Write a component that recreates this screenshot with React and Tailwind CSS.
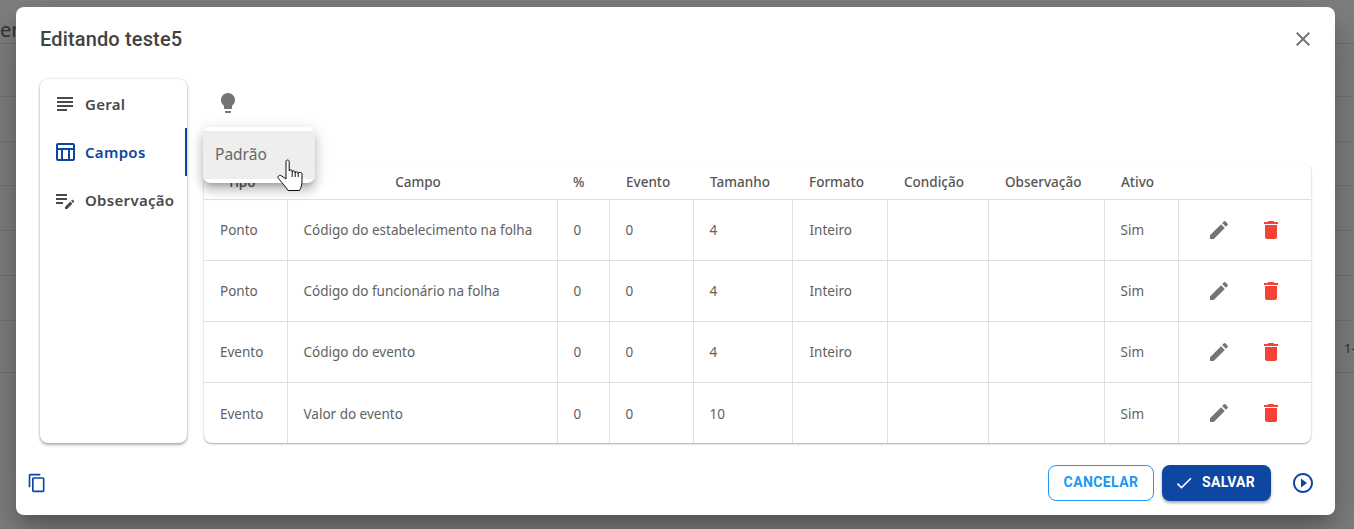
import React from "react";

const icons = {
  subject: "M14 17H4v2h10v-2zm6-8H4v2h16V9zM4 15h16v-2H4v2zM4 5v2h16V5H4z",
  table: "M20 3H5c-1.1 0-2 .9-2 2v14c0 1.1.9 2 2 2h15c1.1 0 2-.9 2-2V5c0-1.1-.9-2-2-2zm0 2v3H5V5h15zm-5 14h-5v-9h5v9zM5 10h3v9H5v-9zm12 9v-9h3v9h-3z",
  note: "M3 10h11v2H3v-2zm0-2h11V6H3v2zm0 8h7v-2H3v2zm15.01-3.13.71-.71c.39-.39 1.02-.39 1.41 0l.71.71c.39.39.39 1.02 0 1.41l-.71.71-2.12-2.12zm-.71.71-5.3 5.3V21h2.12l5.3-5.3-2.12-2.12z",
  bulb: "M9 21c0 .55.45 1 1 1h4c.55 0 1-.45 1-1v-1H9v1zm3-19C8.14 2 5 5.14 5 9c0 2.38 1.19 4.47 3 5.74V17c0 .55.45 1 1 1h6c.55 0 1-.45 1-1v-2.26c1.81-1.27 3-3.36 3-5.74 0-3.86-3.14-7-7-7z",
  edit: "M3 17.25V21h3.75L17.81 9.94l-3.75-3.75L3 17.25zM20.71 7.04c.39-.39.39-1.02 0-1.41l-2.34-2.34a.9959.9959 0 0 0-1.41 0l-1.83 1.83 3.75 3.75 1.83-1.83z",
  trash: "M6 19c0 1.1.9 2 2 2h8c1.1 0 2-.9 2-2V7H6v12zM19 4h-3.5l-1-1h-5l-1 1H5v2h14V4z",
  close: "M19 6.41 17.59 5 12 10.59 6.41 5 5 6.41 10.59 12 5 17.59 6.41 19 12 13.41 17.59 19 19 17.59 13.41 12z",
  copy: "M16 1H4c-1.1 0-2 .9-2 2v14h2V3h12V1zm3 4H8c-1.1 0-2 .9-2 2v14c0 1.1.9 2 2 2h11c1.1 0 2-.9 2-2V7c0-1.1-.9-2-2-2zm0 16H8V7h11v14z",
  check: "M9 16.17 4.83 12l-1.42 1.41L9 19 21 7l-1.41-1.41z",
  play: "m10 16.5 6-4.5-6-4.5v9zM12 2C6.48 2 2 6.48 2 12s4.48 10 10 10 10-4.48 10-10S17.52 2 12 2zm0 18c-4.41 0-8-3.59-8-8s3.59-8 8-8 8 3.59 8 8-3.59 8-8 8z",
};

function Icon({ name, className }) {
  return (
    <svg viewBox="0 0 24 24" fill="currentColor" className={className}>
      <path d={icons[name]} />
    </svg>
  );
}

const rows = [
  { tipo: "Ponto", campo: "Código do estabelecimento na folha", tamanho: "4", formato: "Inteiro" },
  { tipo: "Ponto", campo: "Código do funcionário na folha", tamanho: "4", formato: "Inteiro" },
  { tipo: "Evento", campo: "Código do evento", tamanho: "4", formato: "Inteiro" },
  { tipo: "Evento", campo: "Valor do evento", tamanho: "10", formato: "" },
];

const headers = ["Tipo", "Campo", "%", "Evento", "Tamanho", "Formato", "Condição", "Observação", "Ativo", ""];
const cell = "border-r border-[#e0e0e0] px-4 pt-[2px] font-normal";

export default function App() {
  return (
    <div className="relative h-[529px] w-[1354px] overflow-hidden bg-[#808080] font-['Noto_Sans',sans-serif]">
      {/* pagina atras do modal */}
      <div className="h-[44px] border-b border-[#6f6f6f] pt-[20px] text-[20px] leading-[20px] text-[#333]">en</div>
      <div className="h-[53px] border-b border-[#747474]" />
      <div className="h-[45px] border-b border-[#747474]" />
      <div className="h-[44px] border-b border-[#747474]" />
      <div className="h-[45px] border-b border-[#747474]" />
      <div className="h-[45px] border-b border-[#747474]" />
      <div className="h-[45px] border-b border-[#747474]" />
      <div className="flex h-[52px] justify-end border-b border-[#6f6f6f] pt-[17px] text-[13px] leading-[20px] text-[#333]">
        <span className="w-[10px] whitespace-nowrap">1-</span>
      </div>

      <div className="absolute top-[7px] left-[16px] flex h-[508px] w-[1319px] flex-col rounded-lg bg-white shadow-[0_11px_15px_-7px_rgba(0,0,0,0.2),0_24px_38px_3px_rgba(0,0,0,0.14),0_9px_46px_8px_rgba(0,0,0,0.12)]">
        <div className="flex h-[72px] shrink-0 items-center justify-between pr-[20px] pb-[8px] pl-[24px]">
          <h2 className="font-['Roboto',sans-serif] text-[20px] font-medium tracking-[0.15px] text-[#424242]">Editando teste5</h2>
          <Icon name="close" className="h-6 w-6 text-[#757575]" />
        </div>

        <div className="flex h-[364px] shrink-0 gap-[17px] px-[24px]">
          <nav className="relative w-[147px] shrink-0 rounded-lg bg-white pt-[1px] shadow-[0_2px_3px_rgba(0,0,0,0.3),0_0_2px_rgba(0,0,0,0.2)]">
            <div className="flex h-[48px] items-center gap-[7px] pl-[13px] text-[15px] font-semibold tracking-[0.3px] text-[#4a4a4a]">
              <Icon name="subject" className="h-6 w-6" />
              <span className="ml-[1px]">Geral</span>
            </div>
            <div className="flex h-[48px] items-center gap-[7px] border-r-2 border-[#0d47a1] pl-[13px] text-[15px] font-semibold tracking-[0.3px] text-[#0d47a1]">
              <Icon name="table" className="h-6 w-6" />
              <span className="ml-[1px]">Campos</span>
            </div>
            <div className="flex h-[48px] items-center gap-[7px] pl-[13px] text-[15px] font-semibold tracking-[0.3px] text-[#4a4a4a]">
              <Icon name="note" className="h-6 w-6" />
              <span className="ml-[1px]">Observação</span>
            </div>
          </nav>

          <div className="relative flex min-w-0 flex-1 flex-col">
            <div className="h-[84px] pt-[12px] pl-[12px]">
              <Icon name="bulb" className="h-6 w-6 text-[#757575]" />
            </div>

            <div className="h-[280px] overflow-hidden rounded-lg bg-white shadow-[0_1px_2px_rgba(0,0,0,0.35)]">
              <table className="w-[1107px] table-fixed border-collapse text-[13.5px] text-[#616161]">
                <colgroup>
                  <col className="w-[83px]" />
                  <col className="w-[270px]" />
                  <col className="w-[52px]" />
                  <col className="w-[84px]" />
                  <col className="w-[99px]" />
                  <col className="w-[95px]" />
                  <col className="w-[101px]" />
                  <col className="w-[116px]" />
                  <col className="w-[74px]" />
                  <col className="w-[133px]" />
                </colgroup>
                <thead>
                  <tr className="h-[36px] border-b border-[#e0e0e0]">
                    {headers.map((h, i) => (
                      <th key={i} className={`pt-[2px] text-[13.5px] font-medium text-[#555] ${i < 2 ? "pr-[24px] pl-4 text-center" : i === 2 ? "pr-0 pl-4 text-left" : "pr-0 pl-[17px] text-left"}`}>
                        {h}
                      </th>
                    ))}
                  </tr>
                </thead>
                <tbody>
                  {rows.map((r, i) => (
                    <tr key={i} className={`h-[61px] ${i < rows.length - 1 ? "border-b border-[#e0e0e0]" : ""}`}>
                      <td className={cell}>{r.tipo}</td>
                      <td className={cell}>{r.campo}</td>
                      <td className={cell}>0</td>
                      <td className={cell}>0</td>
                      <td className={cell}>{r.tamanho}</td>
                      <td className="border-r border-[#e0e0e0] pt-[2px] pr-4 pl-[17px] font-normal">{r.formato}</td>
                      <td className={cell} />
                      <td className={cell} />
                      <td className={cell}>Sim</td>
                      <td className="pl-[28px]">
                        <div className="flex gap-[28px]">
                          <Icon name="edit" className="h-6 w-6 text-[#757575]" />
                          <Icon name="trash" className="h-6 w-6 text-[#f44336]" />
                        </div>
                      </td>
                    </tr>
                  ))}
                </tbody>
              </table>
            </div>

            {/* menu aberto sobre a tabela */}
            <div className="absolute top-[48px] left-[-1px] w-[112px] rounded-lg bg-white py-[4px] shadow-[0_5px_5px_-3px_rgba(0,0,0,0.2),0_8px_10px_1px_rgba(0,0,0,0.14),0_3px_14px_2px_rgba(0,0,0,0.12)]">
              <div className="flex h-[48px] items-center bg-[#eeeeee] pb-[1px] pl-[12px] text-[15.5px] text-[#666]">Padrão</div>
            </div>
            <svg viewBox="0 0 28 34" fill="none" className="absolute top-[79px] left-[72px] h-[34px] w-[28px]">
              <path
                d="M10 3.500c0-2 3.200-2 3.200 0V13c0-1.600 3-1.600 3 0v1c0-1.500 3-1.500 3 0v1c0-1.500 3-1.500 3 0v.5c0-1.500 3.800-1.500 3.800.5v7c0 4-1 7-2.500 9.500H12c-2-3.500-5-6.500-9.500-12-1.500-2 .5-3.700 2.500-3l5 3.500V3.500z"
                fill="#fff"
                stroke="#111"
                strokeWidth="1"
                strokeLinejoin="round"
              />
              <path d="M16.200 13v6M19.200 14v5M22.200 15v4" stroke="#111" strokeWidth="1" />
            </svg>
          </div>
        </div>

        <div className="flex flex-1 items-center justify-between pt-[7px] pr-[20px] pl-[11px]">
          <Icon name="copy" className="h-5 w-5 text-[#0d47a1]" />
          <div className="flex items-center">
            <button className="h-[36px] w-[106px] rounded-lg border border-[#2196f3] bg-white font-['Roboto',sans-serif] text-[14px] font-bold tracking-[0.4px] text-[#2196f3]">
              CANCELAR
            </button>
            <button className="ml-[8px] flex h-[36px] w-[109px] items-center gap-[8px] rounded-lg bg-[#0d47a1] pl-[12px] font-['Roboto',sans-serif] text-[14px] font-bold tracking-[0.3px] text-white shadow-[0_2px_3px_rgba(0,0,0,0.35)]">
              <Icon name="check" className="h-[20px] w-[20px]" />
              SALVAR
            </button>
            <Icon name="play" className="ml-[20px] h-6 w-6 text-[#0d47a1]" />
          </div>
        </div>
      </div>
    </div>
  );
}
